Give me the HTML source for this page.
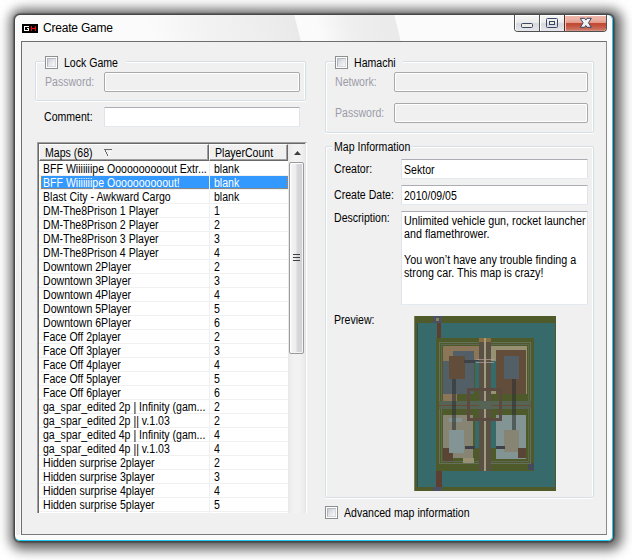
<!DOCTYPE html><html><head><meta charset="utf-8"><style>
*{margin:0;padding:0;box-sizing:border-box}
html,body{width:632px;height:560px;overflow:hidden;background:#fff}
body{position:relative;font-family:"Liberation Sans",sans-serif;font-size:11px;color:#000}
.a{position:absolute}
.t{position:absolute;font-size:12px;line-height:13px;white-space:pre;transform:scaleX(0.88);transform-origin:0 0}
.dis{color:#9c9ca8}
.win{position:absolute;left:14px;top:14px;width:600px;height:528px;border:1px solid #474747;border-radius:6px 6px 6px 6px;
 background:#fbfbfb;
 box-shadow:0 0 2px 0 rgba(0,0,0,1),2px 1.5px 12px 6px rgba(0,0,0,0.6)}
.client{position:absolute;left:21px;top:41px;width:586px;height:494px;background:#f0f0f0;border:1px solid #6e6e6e;border-right-color:#8a8a8a;border-bottom-color:#7a7a7a}
.gb{position:absolute;border:1px solid #d5dfe5;border-radius:2px;box-shadow:inset 1px 1px 0 #fff,inset -1px 0 0 #fff,0 1px 0 #fff}
.gap{position:absolute;background:#f0f0f0}
.cb{position:absolute;width:13px;height:13px;border:1px solid #8e8f8f;background:#fff;padding:1px}
.cb i{display:block;width:9px;height:9px;border:1px solid #b4b8c2;border-right-color:#d6d9de;border-bottom-color:#d6d9de;background:linear-gradient(135deg,#c8ccd4 0%,#e4e6ea 50%,#f8f8f8 100%)}
.tb{position:absolute;background:#fff;border:1px solid #e2e3ea;border-top-color:#abadb3;border-bottom-color:#e3e9ef;border-radius:1px}
.tbd{position:absolute;background:#f0f0f0;border:1px solid #a9a9a9;border-radius:2px;box-shadow:inset 1px 1px 0 #fff,inset -1px -1px 0 #fff}
</style></head><body>
<div class="win"></div>
<div class="a" style="left:15px;top:15px;width:598px;height:526px;border-right:1px solid #1ec8f0;border-bottom:1px solid #1ec8f0;border-radius:0 5px 5px 5px"></div>
<div class="a" style="left:15px;top:21px;width:1px;height:515px;background:#fff"></div>
<div class="a" style="left:15px;top:15px;width:597px;height:26px;overflow:hidden;border-radius:5px 5px 0 0">
<div class="a" style="left:135px;top:-5px;width:148px;height:40px;transform:skewX(14deg);background:linear-gradient(90deg,rgba(236,236,236,0) 0%,rgba(236,236,236,0.6) 40%,#ededed 80%,#e9e9e9 100%)"></div>
<div class="a" style="left:303px;top:-5px;width:80px;height:40px;transform:skewX(14deg);background:linear-gradient(90deg,rgba(238,238,238,0) 0%,#efefef 40%,#eaeaea 100%)"></div>
</div>
<svg class="a" style="left:22px;top:24px" width="16" height="9" viewBox="0 0 16 9" shape-rendering="crispEdges">
<rect width="16" height="9" fill="#000"/>
<path d="M2 2h5v1H3v3h3V5H5V4h2v3H2z" fill="#fff"/>
<path d="M9 2h1v2h3V2h1v5h-1V5h-3v2H9z" fill="#f00"/>
</svg>
<div class="t" style="left:43px;top:21px;font-size:12px;line-height:14px;letter-spacing:-0.2px;transform:none">Create Game</div>
<div class="a" style="left:514px;top:15px;width:93px;height:17px;border:1px solid #505050;border-top:none;border-radius:0 0 4px 4px;overflow:hidden">
<div class="a" style="left:0;top:0;width:24px;height:16px;background:linear-gradient(#f6f6f6 0%,#ececec 45%,#d6d8de 55%,#e6e8ee 100%);box-shadow:inset 1px 1px 0 #fff"></div>
<div class="a" style="left:24px;top:0;width:1px;height:16px;background:#505050"></div>
<div class="a" style="left:25px;top:0;width:24px;height:16px;background:linear-gradient(#f6f6f6 0%,#ececec 45%,#d6d8de 55%,#e6e8ee 100%);box-shadow:inset 1px 1px 0 #fff"></div>
<div class="a" style="left:49px;top:0;width:1px;height:16px;background:#5a2a20"></div>
<div class="a" style="left:50px;top:0;width:42px;height:16px;background:linear-gradient(#f0b8ac 0%,#eab0a2 30%,#e49a8a 48%,#bc4a36 50%,#c44e36 62%,#c8705e 90%,#dc9a8a 100%);box-shadow:inset 0 1px 0 #fff,inset 1px 0 0 #f4c8bc,inset -1px 0 0 #e8a898"></div>
</div>
<div class="a" style="left:521px;top:23px;width:12px;height:5px;border:1.5px solid #3c4664;border-radius:1.5px;background:#ecece6"></div>
<div class="a" style="left:546px;top:18px;width:12px;height:10px;border:1.5px solid #3c4664;border-radius:1.5px;background:transparent"></div>
<div class="a" style="left:549px;top:21px;width:6px;height:4px;border:1.5px solid #3c4664;background:#ecece6"></div>
<svg class="a" style="left:579px;top:17px" width="14" height="12" viewBox="0 0 14 12">
<polygon transform="translate(1.3,1.3)" points="0,0 4.3,0 5.5,1.8 6.7,0 11,0 8.2,4.5 11,9 6.7,9 5.5,7.2 4.3,9 0,9 2.8,4.5" fill="#f4f4f4" stroke="#3a4260" stroke-width="1" stroke-linejoin="round"/>
</svg>
<div class="a" style="left:16px;top:41px;width:4px;height:494px;background:linear-gradient(#fafafa 0%,#fafafa 16%,#eeeeee 50%,#eeeeee 100%)"></div>
<div class="client"></div>
<div class="gb" style="left:35px;top:61px;width:271px;height:40px"></div>
<div class="gap" style="left:45px;top:58px;width:81px;height:6px"></div>
<div class="cb" style="left:45px;top:56px"><i></i></div>
<div class="t" style="left:64px;top:57px">Lock Game</div>
<div class="t dis" style="left:45px;top:76px">Password:</div>
<div class="tbd" style="left:104px;top:72px;width:196px;height:20px"></div>
<div class="t" style="left:44px;top:111px">Comment:</div>
<div class="tb" style="left:104px;top:107px;width:196px;height:20px"></div>
<div class="a" style="left:37px;top:142px;width:270px;height:371px;background:#fff;border-left:1px solid #a0a0a0;border-top:1px solid #a0a0a0;border-right:1px solid #fff;overflow:hidden">
<div class="a" style="left:0;top:0;width:2px;height:400px;background:linear-gradient(90deg,#696969 50%,#fff 50%)"></div>
<div class="a" style="left:0;top:0;width:268px;height:1px;background:#696969"></div>
<div class="a" style="left:267px;top:0;width:1px;height:400px;background:#e3e3e3"></div>
</div>
<div class="a" style="left:39px;top:144px;width:170px;height:17px;background:#f0f0f0;border-left:1px solid #fff;border-top:1px solid #fff;border-right:1px solid #696969;border-bottom:1px solid #696969;box-shadow:inset -1px -1px 0 #a0a0a0"></div>
<div class="a" style="left:209px;top:144px;width:79px;height:17px;background:#f0f0f0;border-left:1px solid #fff;border-top:1px solid #fff;border-right:1px solid #696969;border-bottom:1px solid #696969;box-shadow:inset -1px -1px 0 #a0a0a0"></div>
<div class="t" style="left:45px;top:147px">Maps (68)</div>
<svg class="a" style="left:104px;top:149px" width="8" height="7" viewBox="0 0 8 7" shape-rendering="crispEdges">
<path d="M0 0h8v1H0z M1 1h1v2H1z M2 3h1v2H2z M3 5h1v2H3z" fill="#6a6a6a"/>
<path d="M6 1h1v2H6z M5 3h1v2H5z M4 5h1v1H4z" fill="#fff"/>
</svg>
<div class="t" style="left:215px;top:147px">PlayerCount</div>
<div class="a" style="left:39px;top:175px;width:249px;height:1px;background:#f0f0f0"></div>
<div class="t" style="left:43px;top:163px;">BFF Wiiiiiiipe Oooooooooout Extr...</div>
<div class="t" style="left:214px;top:163px;">blank</div>
<div class="a" style="left:41px;top:176px;width:168px;height:13px;background:#3399ff"></div>
<div class="a" style="left:210px;top:176px;width:78px;height:13px;background:#3399ff"></div>
<div class="a" style="left:41px;top:176px;width:247px;height:13px;border:1px dotted #e07a10;border-top:none"></div>
<div class="a" style="left:39px;top:189px;width:249px;height:1px;background:#f0f0f0"></div>
<div class="t" style="left:43px;top:177px;color:#fff;">BFF Wiiiiiiipe Oooooooooout!</div>
<div class="t" style="left:214px;top:177px;color:#fff;">blank</div>
<div class="a" style="left:39px;top:203px;width:249px;height:1px;background:#f0f0f0"></div>
<div class="t" style="left:43px;top:191px;">Blast City - Awkward Cargo</div>
<div class="t" style="left:214px;top:191px;">blank</div>
<div class="a" style="left:39px;top:217px;width:249px;height:1px;background:#f0f0f0"></div>
<div class="t" style="left:43px;top:205px;">DM-The8Prison 1 Player</div>
<div class="t" style="left:214px;top:205px;">1</div>
<div class="a" style="left:39px;top:231px;width:249px;height:1px;background:#f0f0f0"></div>
<div class="t" style="left:43px;top:219px;">DM-The8Prison 2 Player</div>
<div class="t" style="left:214px;top:219px;">2</div>
<div class="a" style="left:39px;top:245px;width:249px;height:1px;background:#f0f0f0"></div>
<div class="t" style="left:43px;top:233px;">DM-The8Prison 3 Player</div>
<div class="t" style="left:214px;top:233px;">3</div>
<div class="a" style="left:39px;top:259px;width:249px;height:1px;background:#f0f0f0"></div>
<div class="t" style="left:43px;top:247px;">DM-The8Prison 4 Player</div>
<div class="t" style="left:214px;top:247px;">4</div>
<div class="a" style="left:39px;top:273px;width:249px;height:1px;background:#f0f0f0"></div>
<div class="t" style="left:43px;top:261px;">Downtown 2Player</div>
<div class="t" style="left:214px;top:261px;">2</div>
<div class="a" style="left:39px;top:287px;width:249px;height:1px;background:#f0f0f0"></div>
<div class="t" style="left:43px;top:275px;">Downtown 3Player</div>
<div class="t" style="left:214px;top:275px;">3</div>
<div class="a" style="left:39px;top:301px;width:249px;height:1px;background:#f0f0f0"></div>
<div class="t" style="left:43px;top:289px;">Downtown 4Player</div>
<div class="t" style="left:214px;top:289px;">4</div>
<div class="a" style="left:39px;top:315px;width:249px;height:1px;background:#f0f0f0"></div>
<div class="t" style="left:43px;top:303px;">Downtown 5Player</div>
<div class="t" style="left:214px;top:303px;">5</div>
<div class="a" style="left:39px;top:329px;width:249px;height:1px;background:#f0f0f0"></div>
<div class="t" style="left:43px;top:317px;">Downtown 6Player</div>
<div class="t" style="left:214px;top:317px;">6</div>
<div class="a" style="left:39px;top:343px;width:249px;height:1px;background:#f0f0f0"></div>
<div class="t" style="left:43px;top:331px;">Face Off 2player</div>
<div class="t" style="left:214px;top:331px;">2</div>
<div class="a" style="left:39px;top:357px;width:249px;height:1px;background:#f0f0f0"></div>
<div class="t" style="left:43px;top:345px;">Face Off 3player</div>
<div class="t" style="left:214px;top:345px;">3</div>
<div class="a" style="left:39px;top:371px;width:249px;height:1px;background:#f0f0f0"></div>
<div class="t" style="left:43px;top:359px;">Face Off 4player</div>
<div class="t" style="left:214px;top:359px;">4</div>
<div class="a" style="left:39px;top:385px;width:249px;height:1px;background:#f0f0f0"></div>
<div class="t" style="left:43px;top:373px;">Face Off 5player</div>
<div class="t" style="left:214px;top:373px;">5</div>
<div class="a" style="left:39px;top:399px;width:249px;height:1px;background:#f0f0f0"></div>
<div class="t" style="left:43px;top:387px;">Face Off 6player</div>
<div class="t" style="left:214px;top:387px;">6</div>
<div class="a" style="left:39px;top:413px;width:249px;height:1px;background:#f0f0f0"></div>
<div class="t" style="left:43px;top:401px;">ga_spar_edited 2p | Infinity (gam...</div>
<div class="t" style="left:214px;top:401px;">2</div>
<div class="a" style="left:39px;top:427px;width:249px;height:1px;background:#f0f0f0"></div>
<div class="t" style="left:43px;top:415px;">ga_spar_edited 2p || v.1.03</div>
<div class="t" style="left:214px;top:415px;">2</div>
<div class="a" style="left:39px;top:441px;width:249px;height:1px;background:#f0f0f0"></div>
<div class="t" style="left:43px;top:429px;">ga_spar_edited 4p | Infinity (gam...</div>
<div class="t" style="left:214px;top:429px;">4</div>
<div class="a" style="left:39px;top:455px;width:249px;height:1px;background:#f0f0f0"></div>
<div class="t" style="left:43px;top:443px;">ga_spar_edited 4p || v.1.03</div>
<div class="t" style="left:214px;top:443px;">4</div>
<div class="a" style="left:39px;top:469px;width:249px;height:1px;background:#f0f0f0"></div>
<div class="t" style="left:43px;top:457px;">Hidden surprise 2player</div>
<div class="t" style="left:214px;top:457px;">2</div>
<div class="a" style="left:39px;top:483px;width:249px;height:1px;background:#f0f0f0"></div>
<div class="t" style="left:43px;top:471px;">Hidden surprise 3player</div>
<div class="t" style="left:214px;top:471px;">3</div>
<div class="a" style="left:39px;top:497px;width:249px;height:1px;background:#f0f0f0"></div>
<div class="t" style="left:43px;top:485px;">Hidden surprise 4player</div>
<div class="t" style="left:214px;top:485px;">4</div>
<div class="a" style="left:39px;top:511px;width:249px;height:1px;background:#f0f0f0"></div>
<div class="t" style="left:43px;top:499px;">Hidden surprise 5player</div>
<div class="t" style="left:214px;top:499px;">5</div>
<div class="a" style="left:209px;top:161px;width:1px;height:352px;background:#f0f0f0"></div>
<div class="a" style="left:30px;top:513px;width:280px;height:18px;background:#f0f0f0"></div>
<div class="a" style="left:288px;top:144px;width:17px;height:369px;background:linear-gradient(90deg,#e8e8e8 0%,#f2f2f2 30%,#f2f2f2 70%,#eaeaea 100%)"></div>
<svg class="a" style="left:294px;top:151px" width="7" height="4" viewBox="0 0 7 4"><path d="M3.5 0L7 4H0z" fill="#404040"/></svg>
<div class="a" style="left:289px;top:162px;width:15px;height:192px;border:1px solid #9a9a9a;border-radius:2px;background:linear-gradient(90deg,#f6f6f6 0%,#ededed 45%,#d8d8dc 55%,#cfd0d6 100%);box-shadow:inset 1px 1px 0 #fff,inset -1px -1px 0 #f4f4f4"></div>
<div class="a" style="left:293px;top:254px;width:7px;height:1px;background:#404040;box-shadow:0 3px 0 #404040,0 6px 0 #404040"></div>
<div class="gb" style="left:325px;top:61px;width:269px;height:72px"></div>
<div class="gap" style="left:335px;top:58px;width:68px;height:6px"></div>
<div class="cb" style="left:335px;top:56px"><i></i></div>
<div class="t" style="left:354px;top:57px">Hamachi</div>
<div class="t dis" style="left:335px;top:76px">Network:</div>
<div class="tbd" style="left:394px;top:72px;width:194px;height:20px"></div>
<div class="t dis" style="left:335px;top:107px">Password:</div>
<div class="tbd" style="left:394px;top:103px;width:194px;height:20px"></div>
<div class="gb" style="left:325px;top:146px;width:269px;height:352px"></div>
<div class="gap" style="left:332px;top:143px;width:80px;height:6px"></div>
<div class="t" style="left:334px;top:141px">Map Information</div>
<div class="t" style="left:334px;top:163px">Creator:</div>
<div class="tb" style="left:401px;top:159px;width:187px;height:20px"></div>
<div class="t" style="left:404px;top:164px">Sektor</div>
<div class="t" style="left:334px;top:189px">Create Date:</div>
<div class="tb" style="left:401px;top:185px;width:187px;height:20px"></div>
<div class="t" style="left:404px;top:190px">2010/09/05</div>
<div class="t" style="left:334px;top:212px">Description:</div>
<div class="tb" style="left:401px;top:211px;width:187px;height:94px"></div>
<div class="t" style="left:404px;top:215px;transform:scaleX(0.895)">Unlimited vehicle gun, rocket launcher
and flamethrower.

You won’t have any trouble finding a
strong car. This map is crazy!</div>
<div class="t" style="left:334px;top:314px">Preview:</div>
<svg class="a" style="left:414px;top:316px" width="142" height="175" viewBox="0 0 142 175" shape-rendering="crispEdges">
<rect width="142" height="175" fill="#4e5a2a"/>
<rect x="0" y="0" width="1" height="175" fill="#7a8060"/>
<rect x="3" y="7" width="138" height="164" fill="#376a6b"/>
<rect x="3" y="7" width="1" height="164" fill="#2a4e50"/>
<rect x="22" y="22" width="98" height="133" fill="#4e5a2a"/>
<rect x="19" y="0" width="9" height="7" fill="#4a5060"/>
<rect x="22" y="2" width="3" height="3" fill="#8a8050"/>
<rect x="23" y="7" width="4" height="15" fill="#5e3e30"/>
<rect x="22" y="155" width="6" height="16" fill="#5e3e30"/>
<rect x="19" y="171" width="9" height="4" fill="#4a5060"/>
<rect x="114" y="147" width="6" height="7" fill="#444a58"/>
<rect x="25.5" y="26.5" width="91" height="121" fill="none" stroke="#64705c" stroke-width="1"/>
<rect x="27.5" y="28.5" width="87" height="117" fill="none" stroke="#5c6852" stroke-width="1"/>
<!-- TL -->
<rect x="29" y="30" width="36" height="15" fill="#8c765a"/>
<rect x="29" y="30" width="10" height="55" fill="#8c765a"/>
<rect x="39" y="35" width="21" height="43" fill="#525f66"/>
<rect x="29" y="45" width="31" height="33" fill="#525f66"/>
<rect x="29" y="78" width="14" height="7" fill="#8c765a"/>
<rect x="35" y="40" width="16" height="23" fill="#624c3a"/>
<rect x="50" y="44" width="27" height="3" fill="#3e4248"/>
<!-- TR -->
<rect x="77" y="30" width="36" height="48" fill="#969173"/>
<rect x="82" y="34" width="30" height="44" fill="#624c3a"/>
<rect x="90" y="40" width="15" height="23" fill="#525f66"/>
<!-- BL -->
<rect x="29" y="99" width="30" height="43" fill="#878473"/>
<rect x="49" y="142" width="11" height="5" fill="#969173"/>
<rect x="29" y="132" width="10" height="13" fill="#5a4436"/>
<rect x="35" y="102" width="13" height="4" fill="#829494"/>
<rect x="35" y="114" width="15" height="23" fill="#829494"/>
<!-- BR -->
<rect x="82" y="99" width="30" height="44" fill="#829494"/>
<rect x="90" y="114" width="15" height="22" fill="#878473"/>
<rect x="104" y="132" width="8" height="10" fill="#5a4436"/>
<!-- horizontal band road -->
<rect x="25" y="85" width="92" height="8" fill="#556455"/>
<rect x="25" y="89" width="92" height="1" fill="#6a4a38"/>
<!-- dark vertical roads -->
<rect x="38" y="63" width="4" height="51" fill="#2a2e30" opacity="0.55"/>
<rect x="98" y="63" width="4" height="51" fill="#2a2e30" opacity="0.55"/>
<!-- channels -->
<rect x="61" y="45" width="4" height="28" fill="#376a6b"/>
<rect x="77" y="45" width="5" height="28" fill="#376a6b"/>
<rect x="61" y="104" width="4" height="28" fill="#376a6b"/>
<rect x="77" y="104" width="5" height="28" fill="#376a6b"/>
<!-- central road -->
<rect x="65" y="22" width="5" height="133" fill="#5a5044"/>
<rect x="72" y="22" width="5" height="133" fill="#5a5044"/>
<rect x="70" y="22" width="2" height="133" fill="#a09c80"/>
<rect x="65" y="22" width="5" height="4" fill="#8a6e40"/>
<rect x="72" y="22" width="5" height="4" fill="#8a6e40"/>
<rect x="65" y="85" width="12" height="8" fill="#556455"/>
<!-- center square -->
<rect x="54.5" y="73.5" width="32" height="30" fill="none" stroke="#5a4a40" stroke-width="3"/>
<rect x="51" y="130" width="10" height="3" fill="#3e4248"/>
<rect x="82" y="130" width="9" height="3" fill="#3e4248"/>
<rect x="62" y="43" width="18" height="1" fill="#b4a098" opacity="0.7"/>
<rect x="62" y="46" width="18" height="1" fill="#b4a098" opacity="0.7"/>
</svg>
<div class="cb" style="left:325px;top:506px"><i></i></div>
<div class="t" style="left:344px;top:507px">Advanced map information</div>
</body></html>
